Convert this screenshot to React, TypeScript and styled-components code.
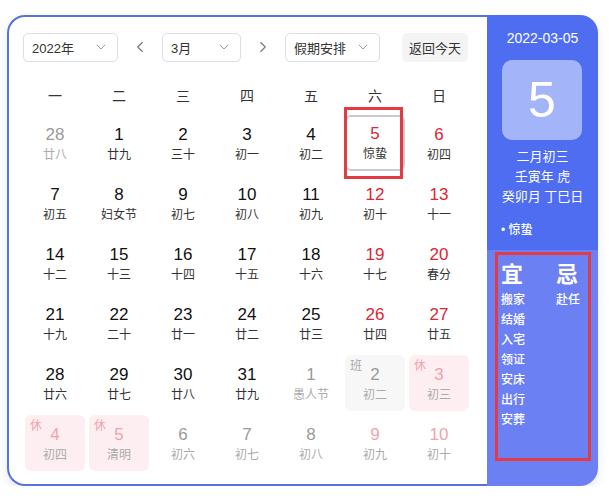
import React from 'react';
import styled, { createGlobalStyle, css } from 'styled-components';
import { ChevronDown, ChevronLeft, ChevronRight } from 'lucide-react';

const GlobalStyle = createGlobalStyle`
    html, body {
        margin: 0;
        padding: 0;
        background: #ffffff;
    }
    body {
        font-family: "Liberation Sans", "Noto Sans CJK SC", sans-serif;
        color: #333;
    }
`;

const Root = styled.div`
    display: flex;
    width: 591px;
    height: 471px;
    margin: 15px 0 0 7px;
    border-radius: 18px;
    box-shadow: 0 4px 10px rgba(70, 100, 210, 0.14);
`;

const Board = styled.div`
    flex: 1 1 auto;
    display: flex;
    flex-direction: column;
    background: #fff;
    border: 2px solid #5672dc;
    border-right: none;
    border-radius: 18px 0 0 18px;
    padding: 16px 0 0 14px;
`;

const Toolbar = styled.div`
    display: flex;
    align-items: center;
    height: 28px;
`;

const Select = styled.div<{ $w: number }>`
    box-sizing: border-box;
    display: flex;
    align-items: center;
    justify-content: space-between;
    width: ${(p) => p.$w}px;
    height: 29px;
    padding: 0 8px 0 8px;
    border: 1px solid #dcdfe6;
    border-radius: 5px;
    font-size: 13px;
    color: #333;
`;

const NavArrow = styled.div`
    display: flex;
    align-items: center;
    justify-content: center;
    width: 44px;
    color: #777;
`;

const TodayButton = styled.div`
    display: flex;
    align-items: center;
    justify-content: center;
    width: 66px;
    height: 29px;
    margin-left: 22px;
    border-radius: 5px;
    background: #f4f4f5;
    font-size: 13px;
    color: #333;
`;

const Grid = styled.div`
    display: grid;
    grid-template-columns: repeat(7, 64px);
    grid-template-rows: 36px;
    grid-auto-rows: 60px;
    margin-top: 16px;
`;

const WeekHead = styled.div`
    display: flex;
    align-items: center;
    justify-content: center;
    height: 36px;
    font-size: 14px;
    color: #333;
`;

type Kind = 'normal' | 'weekend' | 'other' | 'otherWeekend';

const numberColor: Record<Kind, string> = {
    normal: '#111',
    weekend: '#e02433',
    other: '#9a9a9a',
    otherWeekend: '#f2a3ab',
};

const Cell = styled.div<{ $tag?: 'rest' | 'work'; $selected?: boolean }>`
    position: relative;
    box-sizing: border-box;
    margin: 2px;
    padding-top: 2px;
    border-radius: 6px;
    display: flex;
    flex-direction: column;
    align-items: center;
    justify-content: center;
    gap: 2px;
    ${(p) => p.$tag === 'rest' && css`background: #fdeff1;`}
    ${(p) => p.$tag === 'work' && css`background: #f7f7f8;`}
    ${(p) =>
        p.$selected &&
        css`
            border: 2px solid #c9c9d2;
            padding-top: 0;
        `}
`;

const DayNum = styled.div<{ $kind: Kind }>`
    font-size: 17px;
    line-height: 20px;
    color: ${(p) => numberColor[p.$kind]};
`;

const Lunar = styled.div<{ $dim?: boolean }>`
    font-size: 12px;
    line-height: 16px;
    color: ${(p) => (p.$dim ? '#ababab' : '#333')};
`;

const Tag = styled.span<{ $tag: 'rest' | 'work' }>`
    position: absolute;
    top: 3px;
    left: 5px;
    font-size: 12px;
    line-height: 16px;
    color: ${(p) => (p.$tag === 'rest' ? '#f2a3ab' : '#aaa')};
`;

const Mark = styled.div`
    position: absolute;
    left: -3px;
    top: -10px;
    width: 59px;
    height: 72px;
    box-sizing: border-box;
    border: 3px solid #e23b43;
    pointer-events: none;
`;

const Side = styled.div`
    flex: 0 0 111px;
    display: flex;
    flex-direction: column;
    border-radius: 0 18px 18px 0;
    overflow: hidden;
    color: #fff;
`;

const SideTop = styled.div`
    display: flex;
    flex-direction: column;
    height: 235px;
    padding-top: 13px;
    box-sizing: border-box;
    background: #4e6df1;
`;

const SideDate = styled.div`
    text-align: center;
    font-size: 14px;
    line-height: 20px;
`;

const BigDay = styled.div`
    align-self: center;
    display: flex;
    align-items: center;
    justify-content: center;
    width: 80px;
    height: 80px;
    margin-top: 12px;
    margin-left: -1px;
    border-radius: 10px;
    background: #a3b4f8;
    font-size: 50px;
`;

const Info = styled.div`
    margin-top: 7px;
    text-align: center;
    font-size: 13px;
    line-height: 20px;
`;

const Term = styled.div`
    margin-top: 15px;
    padding-left: 14px;
    font-size: 12px;
    line-height: 16px;
    font-weight: 500;
`;

const SideBottom = styled.div`
    position: relative;
    flex: 1 1 auto;
    display: flex;
    gap: 31px;
    padding: 12px 0 0 14px;
    background: #6b80f2;
`;

const LuckCol = styled.div`
    display: flex;
    flex-direction: column;
`;

const LuckHead = styled.div`
    font-size: 22px;
    line-height: 26px;
    font-weight: bold;
    margin-bottom: 2px;
`;

const LuckItem = styled.div`
    font-size: 12px;
    line-height: 20px;
    font-weight: 500;
`;

const SideMark = styled.div`
    position: absolute;
    top: 2px;
    left: 8px;
    width: 96px;
    height: 209px;
    box-sizing: border-box;
    border: 3px solid #e23b43;
    pointer-events: none;
`;

type Day = { n: number; l: string; k: Kind; tag?: 'rest' | 'work'; sel?: boolean };

const d = (n: number, l: string, k: Kind = 'normal', tag?: 'rest' | 'work', sel?: boolean): Day => ({
    n,
    l,
    k,
    tag,
    sel,
});

const days: Day[] = [
    d(28, '廿八', 'other'), d(1, '廿九'), d(2, '三十'), d(3, '初一'), d(4, '初二'), d(5, '惊蛰', 'weekend', undefined, true), d(6, '初四', 'weekend'),
    d(7, '初五'), d(8, '妇女节'), d(9, '初七'), d(10, '初八'), d(11, '初九'), d(12, '初十', 'weekend'), d(13, '十一', 'weekend'),
    d(14, '十二'), d(15, '十三'), d(16, '十四'), d(17, '十五'), d(18, '十六'), d(19, '十七', 'weekend'), d(20, '春分', 'weekend'),
    d(21, '十九'), d(22, '二十'), d(23, '廿一'), d(24, '廿二'), d(25, '廿三'), d(26, '廿四', 'weekend'), d(27, '廿五', 'weekend'),
    d(28, '廿六'), d(29, '廿七'), d(30, '廿八'), d(31, '廿九'), d(1, '愚人节', 'other'), d(2, '初二', 'other', 'work'), d(3, '初三', 'otherWeekend', 'rest'),
    d(4, '初四', 'otherWeekend', 'rest'), d(5, '清明', 'otherWeekend', 'rest'), d(6, '初六', 'other'), d(7, '初七', 'other'), d(8, '初八', 'other'), d(9, '初九', 'otherWeekend'), d(10, '初十', 'otherWeekend'),
];

const weekNames = ['一', '二', '三', '四', '五', '六', '日'];
const good = ['搬家', '结婚', '入宅', '领证', '安床', '出行', '安葬'];
const bad = ['赴任'];

export default function App() {
    return (
        <>
            <GlobalStyle />
            <Root>
                <Board>
                    <Toolbar>
                        <Select $w={95}>
                            2022年
                            <ChevronDown size={16} strokeWidth={1.5} color="#9a9a9a" />
                        </Select>
                        <NavArrow>
                            <ChevronLeft size={18} strokeWidth={1.5} />
                        </NavArrow>
                        <Select $w={79}>
                            3月
                            <ChevronDown size={16} strokeWidth={1.5} color="#9a9a9a" />
                        </Select>
                        <NavArrow>
                            <ChevronRight size={18} strokeWidth={1.5} />
                        </NavArrow>
                        <Select $w={95}>
                            假期安排
                            <ChevronDown size={16} strokeWidth={1.5} color="#9a9a9a" />
                        </Select>
                        <TodayButton>返回今天</TodayButton>
                    </Toolbar>
                    <Grid>
                        {weekNames.map((w) => (
                            <WeekHead key={w}>{w}</WeekHead>
                        ))}
                        {days.map((day, i) => {
                            const dim = day.k === 'other' || day.k === 'otherWeekend';
                            return (
                                <Cell key={i} $tag={day.tag} $selected={day.sel}>
                                    {day.tag && <Tag $tag={day.tag}>{day.tag === 'rest' ? '休' : '班'}</Tag>}
                                    <DayNum $kind={day.k}>{day.n}</DayNum>
                                    <Lunar $dim={dim}>{day.l}</Lunar>
                                    {day.sel && <Mark />}
                                </Cell>
                            );
                        })}
                    </Grid>
                </Board>
                <Side>
                    <SideTop>
                        <SideDate>2022-03-05</SideDate>
                        <BigDay>5</BigDay>
                        <Info>
                            二月初三
                            <br />
                            壬寅年 虎
                            <br />
                            癸卯月 丁巳日
                        </Info>
                        <Term>• 惊蛰</Term>
                    </SideTop>
                    <SideBottom>
                        <LuckCol>
                            <LuckHead>宜</LuckHead>
                            {good.map((g) => (
                                <LuckItem key={g}>{g}</LuckItem>
                            ))}
                        </LuckCol>
                        <LuckCol>
                            <LuckHead>忌</LuckHead>
                            {bad.map((b) => (
                                <LuckItem key={b}>{b}</LuckItem>
                            ))}
                        </LuckCol>
                        <SideMark />
                    </SideBottom>
                </Side>
            </Root>
        </>
    );
}
